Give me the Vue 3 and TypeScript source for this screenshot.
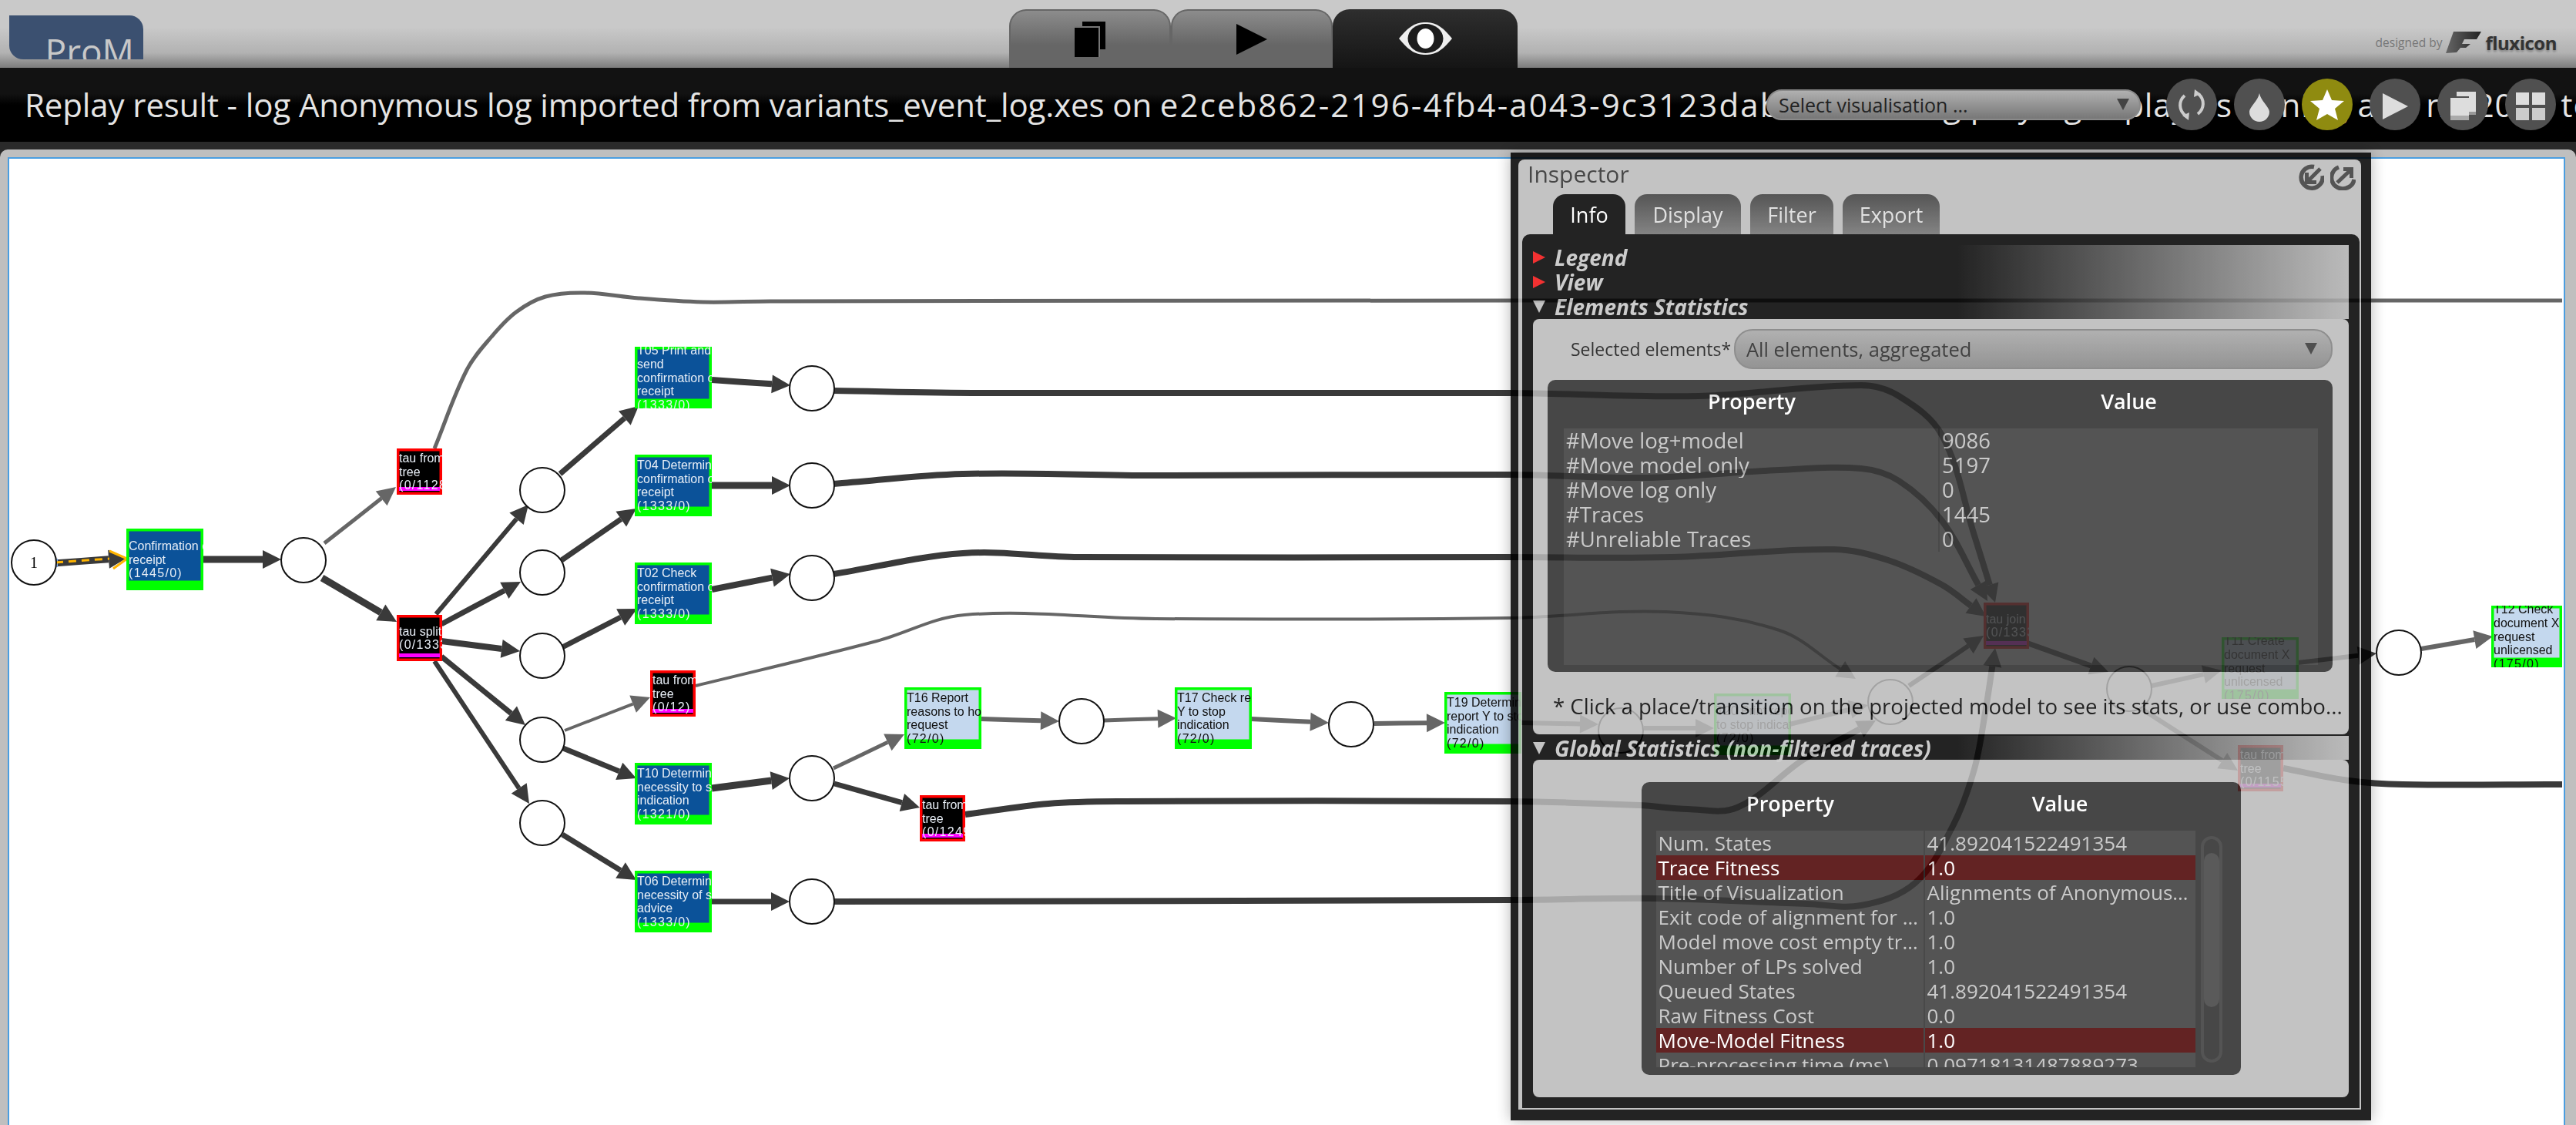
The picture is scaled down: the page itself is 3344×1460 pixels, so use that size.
<template>
  <div class="app">
    <header class="top-bar">
      <div class="logo"><span>ProM</span></div>
      <nav class="view-tabs">
        <div class="view-tab">
          <svg width="40" height="46" viewBox="0 0 40 46">
            <rect x="10" y="0" width="30" height="36" fill="#000" />
            <rect x="0" y="6" width="33" height="40" fill="#777" />
            <rect x="0" y="8" width="31" height="38" fill="#000" />
          </svg>
        </div>
        <div class="view-tab">
          <svg width="40" height="40" viewBox="0 0 40 40"><polygon points="0,0 40,20 0,40" fill="#000" /></svg>
        </div>
        <div class="view-tab view-tab--active">
          <svg width="69" height="42" viewBox="0 0 69 42">
            <path d="M0 21C14 4 22 0 34.5 0C47 0 55 4 69 21C55 38 47 42 34.5 42C22 42 14 38 0 21Z" fill="#eee" />
            <ellipse cx="34.5" cy="21" rx="23" ry="19" fill="#1c1c1c" />
            <ellipse cx="34.5" cy="21" rx="11" ry="13" fill="#fff" />
          </svg>
        </div>
      </nav>
      <div class="credit">
        <span class="credit-by">designed by</span>
        <svg width="46" height="30" viewBox="0 0 46 30">
          <defs>
            <linearGradient id="fx" x1="0" y1="0" x2="1" y2="0">
              <stop offset="0" stop-color="#666" />
              <stop offset="1" stop-color="#222" />
            </linearGradient>
          </defs>
          <path d="M10 1H46L40 11H24L21 17H32L26 22H19L14 28L0 29Z" fill="url(#fx)" />
        </svg>
        <span class="credit-name">fluxicon</span>
      </div>
    </header>

    <section class="title-bar">
      <div class="title-text">{{ titleHead }}<span class="title-id">{{ titleId }}</span><span class="title-tail">{{ titleTail }}</span></div>
      <div class="vis-select">
        <span>Select visualisation ...</span>
        <i class="caret"></i>
      </div>
      <div class="round-buttons">
        <button class="round">
          <svg width="66" height="66" viewBox="0 0 66 66">
            <path d="M24 21C16 28 16 40 25 47M42 19C50 26 50 38 41 45" fill="none" stroke="#ccc" stroke-width="4" />
            <polygon points="21,47 30,43 29,53" fill="#ccc" />
            <polygon points="45,19 36,23 37,13" fill="#ccc" />
          </svg>
        </button>
        <button class="round">
          <svg width="66" height="66" viewBox="0 0 66 66">
            <path d="M33 18C35 28 46 36 46 42A13 13 0 0 1 20 42C20 36 31 28 33 18Z" fill="#ddd" />
          </svg>
        </button>
        <button class="round round--on">
          <svg width="66" height="66" viewBox="0 0 66 66">
            <polygon points="33,13 39,27 55,28 43,38 47,53 33,45 19,53 23,38 11,28 27,27" fill="#fff" />
          </svg>
        </button>
        <button class="round">
          <svg width="66" height="66" viewBox="0 0 66 66"><polygon points="17,18 50,35 17,52" fill="#ddd" /></svg>
        </button>
        <button class="round">
          <svg width="66" height="66" viewBox="0 0 66 66">
            <rect x="25" y="16" width="25" height="30" fill="#ddd" />
            <rect x="41" y="42" width="9" height="4" fill="#999" />
            <rect x="15" y="22" width="26" height="31" fill="#505050" />
            <rect x="17" y="24" width="24" height="29" fill="#ddd" />
            <rect x="17" y="47" width="24" height="6" fill="#aaa" />
          </svg>
        </button>
        <button class="round">
          <svg width="66" height="66" viewBox="0 0 66 66">
            <rect x="14" y="17" width="17" height="16" fill="#ddd" />
            <rect x="35" y="17" width="17" height="16" fill="#ddd" />
            <rect x="14" y="37" width="17" height="16" fill="#ccc" />
            <rect x="35" y="37" width="17" height="16" fill="#ccc" />
          </svg>
        </button>
      </div>
    </section>

    <main class="workspace">
      <div class="frame">
        <div class="canvas">
          <svg class="graph" width="3316" height="1254" viewBox="12 206 3316 1254">
            <defs>
              <clipPath v-for="n in nodes" :id="n.id" :key="n.id">
                <rect :x="n.x" :y="n.y" :width="n.w" :height="n.h" />
              </clipPath>
            </defs>
            <g v-for="a in arrowShapes" :key="a.d">
              <path :d="a.d" fill="none" :stroke="a.c" :stroke-width="a.w" />
              <polygon v-if="a.head" :points="a.head" :fill="a.c" />
            </g>
            <!-- token moving on the first arc -->
            <rect x="66" y="725" width="9" height="11" fill="#7fa6e0" />
            <rect x="69" y="728" width="4" height="5" fill="#f00" />
            <path d="M72 730L142 725" stroke="#ffb400" stroke-width="3" stroke-dasharray="10 7" fill="none" />
            <path d="M142 715L165 725L147 738" stroke="#ffb400" stroke-width="3" fill="none" />

            <g v-for="p in places" :key="p.x + '-' + p.y">
              <circle :cx="p.x" :cy="p.y" r="29" fill="#fff" stroke="#111" stroke-width="2" />
              <text v-if="p.label" :x="p.x" :y="p.y + 7" class="place-label">{{ p.label }}</text>
            </g>

            <g v-for="n in nodes" :key="n.id">
              <rect :x="n.x" :y="n.y" :width="n.w" :height="n.h" :fill="n.kind === 'tau' ? '#f00' : '#0f0'" />
              <rect
                :x="n.x + 3.5"
                :y="n.y + 3.5"
                :width="n.w - 7"
                :height="n.kind === 'tau' ? n.h - 7 : n.h - 16"
                :fill="fillOf(n.kind)"
              />
              <rect v-if="n.kind === 'tau'" :x="n.x + 3" :y="n.y + 50" :width="n.w - 6" height="5" fill="#f0f" />
              <g :clip-path="`url(#${n.id})`">
                <text
                  v-for="(line, i) in n.lines"
                  :key="i"
                  :x="n.x + 3"
                  :y="n.y + n.h / 2 + 5.5 + (i - (n.lines.length - 1) / 2) * 17.8"
                  class="node-label"
                  :class="{ 'node-label--count': line.startsWith('(') }"
                  :fill="n.kind === 'light' ? '#111' : '#e8eef6'"
                >{{ line }}</text>
              </g>
            </g>
          </svg>
        </div>
      </div>
    </main>

    <aside class="inspector">
      <div class="inspector-body">
        <div class="inspector-head">
          <span class="inspector-title">Inspector</span>
          <div class="inspector-icons">
            <svg width="33" height="34" viewBox="0 0 33 34">
              <path d="M20 3.5A14 14 0 1 0 31 15" fill="none" stroke="#393939" stroke-width="5.5" />
              <path d="M28 6L11 23" fill="none" stroke="#393939" stroke-width="5" />
              <polygon points="8,11 13,11 13,21 23,21 23,26 8,26" fill="#393939" />
            </svg>
            <svg width="33" height="34" viewBox="0 0 33 34">
              <path d="M11 4A14 14 0 0 0 21 31A14 14 0 0 0 31 20" fill="none" stroke="#393939" stroke-width="5.5" />
              <path d="M9 24L27 7" fill="none" stroke="#393939" stroke-width="5" />
              <polygon points="17,4 30,4 30,18 25,18 25,9 17,9" fill="#393939" />
            </svg>
          </div>
        </div>
        <div class="inspector-tabs">
          <div v-for="t in tabs" :key="t" class="inspector-tab" :class="{ 'inspector-tab--active': t === 'Info' }">{{ t }}</div>
        </div>
        <div class="inspector-content">
          <div class="band">
            <div class="band-row"><i class="tri tri--red"></i>Legend</div>
            <div class="band-row"><i class="tri tri--red"></i>View</div>
            <div class="band-row"><i class="tri tri--down"></i>Elements Statistics</div>
          </div>
          <div class="sub-panel sub-panel--elements">
            <div class="selected-row">
              <label>Selected elements*</label>
              <div class="elements-select">
                <span>All elements, aggregated</span>
                <i class="caret caret--large"></i>
              </div>
            </div>
            <div class="stat-table stat-table--wide">
              <div class="stat-head"><span>Property</span><span>Value</span></div>
              <div class="stat-body">
                <div v-for="r in elementRows" :key="r[0]" class="stat-row">
                  <span>{{ r[0] }}</span><span>{{ r[1] }}</span>
                </div>
              </div>
            </div>
            <p class="footnote">* Click a place/transition on the projected model to see its stats, or use combo...</p>
          </div>
          <div class="band band--single">
            <div class="band-row"><i class="tri tri--down"></i>Global Statistics (non-filtered traces)</div>
          </div>
          <div class="sub-panel sub-panel--global">
            <div class="stat-table stat-table--narrow">
              <div class="stat-head"><span>Property</span><span>Value</span></div>
              <div class="stat-body">
                <div v-for="r in globalRows" :key="r[0]" class="stat-row" :class="{ 'stat-row--hit': r[0].endsWith('Fitness') }">
                  <span>{{ r[0] }}</span><span>{{ r[1] }}</span>
                </div>
              </div>
              <div class="scroll-track"><div class="scroll-thumb"></div></div>
            </div>
          </div>
        </div>
      </div>
    </aside>
  </div>
</template>

<script setup lang="ts">
type Kind = 'dark' | 'light' | 'tau'
type Pt = [number, number]

interface GraphNode {
  id: string
  x: number
  y: number
  w: number
  h: number
  kind: Kind
  lines: string[]
}

interface Arrow {
  pts: Pt[]
  w: number
  gray?: boolean
  noHead?: boolean
}

const titleHead = 'Replay result - log Anonymous log imported from variants_event_log.xes on '
const titleId = 'e2ceb862-2196-4fb4-a043-9c3123da'
const titleTail = 'b37f40 using playing replay as mining and no 2012 tool'

const tabs = ['Info', 'Display', 'Filter', 'Export']

const elementRows = [
  ['#Move log+model', '9086'],
  ['#Move model only', '5197'],
  ['#Move log only', '0'],
  ['#Traces', '1445'],
  ['#Unreliable Traces', '0']
]

const globalRows = [
  ['Num. States', '41.892041522491354'],
  ['Trace Fitness', '1.0'],
  ['Title of Visualization', 'Alignments of Anonymous log imported'],
  ['Exit code of alignment for ILP-based replay', '1.0'],
  ['Model move cost empty trace', '1.0'],
  ['Number of LPs solved', '1.0'],
  ['Queued States', '41.892041522491354'],
  ['Raw Fitness Cost', '0.0'],
  ['Move-Model Fitness', '1.0'],
  ['Pre-processing time (ms)', '0.09718131487889273']
]

function node(id: string, x: number, y: number, kind: Kind, lines: string[], w?: number): GraphNode {
  return { id, x, y, kind, lines, w: w ?? (kind === 'tau' ? 59 : 100), h: kind === 'tau' ? 60 : 80 }
}

const nodes: GraphNode[] = [
  node('n-start', 164, 686, 'dark', ['Confirmation of', 'receipt', '(1445/0)']),
  node('n-tau1', 515, 582, 'tau', ['tau from', 'tree', '(0/1128)']),
  node('n-split', 515, 798, 'tau', ['tau split', '(0/1333)']),
  node('n-t05', 824, 450, 'dark', ['T05 Print and', 'send', 'confirmation of', 'receipt', '(1333/0)']),
  node('n-t04', 824, 590, 'dark', ['T04 Determine', 'confirmation of', 'receipt', '(1333/0)']),
  node('n-t02', 824, 730, 'dark', ['T02 Check', 'confirmation of', 'receipt', '(1333/0)']),
  node('n-tau12', 844, 870, 'tau', ['tau from', 'tree', '(0/12)']),
  node('n-t10', 824, 990, 'dark', ['T10 Determine', 'necessity to stop', 'indication', '(1321/0)']),
  node('n-t06', 824, 1130, 'dark', ['T06 Determine', 'necessity of stop', 'advice', '(1333/0)']),
  node('n-t16', 1174, 892, 'light', ['T16 Report', 'reasons to hold', 'request', '(72/0)']),
  node('n-tau1246', 1194, 1032, 'tau', ['tau from', 'tree', '(0/1249)']),
  node('n-t17', 1525, 892, 'light', ['T17 Check report', 'Y to stop', 'indication', '(72/0)']),
  node('n-t19', 1875, 898, 'light', ['T19 Determine', 'report Y to stop', 'indication', '(72/0)']),
  node('n-t20', 2225, 900, 'light', ['T20 Print report Y', 'to stop indication', '(72/0)']),
  node('n-join', 2575, 782, 'tau', ['tau join', '(0/1333)']),
  node('n-t11', 2884, 827, 'light', ['T11 Create', 'document X', 'request', 'unlicensed', '(175/0)']),
  node('n-tau115', 2905, 967, 'tau', ['tau from', 'tree', '(0/1155)']),
  node('n-t12', 3234, 786, 'light', ['T12 Check', 'document X', 'request', 'unlicensed', '(175/0)'], 92)
]

const places: { x: number; y: number; label?: string }[] = [
  { x: 44, y: 730, label: '1' },
  { x: 394, y: 727 },
  { x: 704, y: 636 },
  { x: 704, y: 743 },
  { x: 704, y: 851 },
  { x: 704, y: 960 },
  { x: 704, y: 1068 },
  { x: 1054, y: 504 },
  { x: 1054, y: 630 },
  { x: 1054, y: 750 },
  { x: 1054, y: 1010 },
  { x: 1054, y: 1170 },
  { x: 1404, y: 936 },
  { x: 1754, y: 940 },
  { x: 2104, y: 948 },
  { x: 2454, y: 911 },
  { x: 2764, y: 894 },
  { x: 3114, y: 847 }
]

const arrows: Arrow[] = [
  { pts: [[70, 731], [165, 724]], w: 9 },
  { pts: [[263, 726], [365, 726]], w: 9 },
  { pts: [[421, 705], [514, 632]], w: 5, gray: true },
  { pts: [[418, 750], [515, 807]], w: 9 },
  { pts: [[566, 797], [686, 655]], w: 6 },
  { pts: [[573, 810], [676, 755]], w: 7 },
  { pts: [[573, 832], [675, 845]], w: 8 },
  { pts: [[573, 852], [682, 941]], w: 7 },
  { pts: [[564, 858], [687, 1043]], w: 6 },
  { pts: [[727, 615], [829, 527]], w: 7 },
  { pts: [[729, 727], [826, 660]], w: 7 },
  { pts: [[730, 840], [827, 790]], w: 7 },
  { pts: [[733, 948], [844, 905]], w: 4, gray: true },
  { pts: [[731, 971], [826, 1010]], w: 7 },
  { pts: [[730, 1083], [826, 1142]], w: 7 },
  { pts: [[924, 493], [1026, 500]], w: 8 },
  { pts: [[924, 630], [1026, 630]], w: 9 },
  { pts: [[924, 765], [1026, 745]], w: 8 },
  { pts: [[924, 1023], [1025, 1010]], w: 9 },
  { pts: [[1082, 997], [1174, 953]], w: 5, gray: true },
  { pts: [[1083, 1017], [1194, 1048]], w: 7 },
  { pts: [[924, 1170], [1025, 1170]], w: 7 },
  { pts: [[1274, 933], [1375, 936]], w: 6, gray: true },
  { pts: [[1433, 935], [1527, 932]], w: 5, gray: true },
  { pts: [[1624, 933], [1725, 938]], w: 6, gray: true },
  { pts: [[1784, 939], [1876, 938]], w: 6, gray: true },
  { pts: [[1975, 938], [2075, 940]], w: 6, gray: true },
  { pts: [[2134, 945], [2225, 945]], w: 6, gray: true },
  { pts: [[2323, 940], [2425, 915]], w: 6, gray: true },
  { pts: [[2478, 890], [2575, 825]], w: 6 },
  { pts: [[2633, 835], [2737, 872]], w: 7 },
  { pts: [[2793, 890], [2884, 870]], w: 6, gray: true },
  { pts: [[2983, 860], [3085, 848]], w: 6 },
  { pts: [[3143, 842], [3236, 826]], w: 6, gray: true },
  { pts: [[2780, 920], [2905, 1000]], w: 6, gray: true },
  // long curves
  { pts: [[564, 582], [606, 480], [638, 437], [670, 405], [708, 385], [759, 380], [829, 387], [912, 392], [1000, 391], [1970, 390], [3326, 390]], w: 5, gray: true, noHead: true },
  { pts: [[1082, 507], [1280, 510], [1960, 510], [2205, 514], [2416, 500], [2465, 514], [2521, 565], [2563, 695], [2590, 782]], w: 8 },
  { pts: [[1082, 628], [1250, 615], [1500, 617], [1960, 616], [2135, 620], [2310, 610], [2416, 608], [2465, 624], [2521, 676], [2580, 780]], w: 8 },
  { pts: [[1082, 745], [1250, 718], [1400, 723], [1960, 723], [2170, 723], [2381, 713], [2451, 727], [2521, 759], [2578, 800]], w: 8 },
  { pts: [[903, 890], [1138, 832], [1252, 798], [1500, 803], [1960, 802], [2163, 794], [2310, 818], [2409, 881]], w: 4, gray: true },
  { pts: [[1253, 1057], [1361, 1043], [1457, 1040], [1960, 1040], [2128, 1045], [2191, 1050], [2255, 1048], [2339, 987], [2381, 964], [2435, 935]], w: 8 },
  { pts: [[1083, 1170], [1960, 1168], [2149, 1166], [2346, 1173], [2416, 1175], [2486, 1146], [2535, 1072], [2563, 998], [2577, 925], [2590, 841]], w: 8 },
  { pts: [[2964, 997], [3049, 1013], [3119, 1018], [3326, 1018]], w: 8, noHead: true }
]

function smooth(pts: Pt[]): string {
  let d = `M${pts[0][0]} ${pts[0][1]}`
  for (let i = 0; i < pts.length - 1; i++) {
    const p0 = pts[Math.max(i - 1, 0)]
    const p1 = pts[i]
    const p2 = pts[i + 1]
    const p3 = pts[Math.min(i + 2, pts.length - 1)]
    const len = Math.hypot(p2[0] - p1[0], p2[1] - p1[1])
    const l0 = Math.hypot(p2[0] - p0[0], p2[1] - p0[1]) || 1
    const l1 = Math.hypot(p3[0] - p1[0], p3[1] - p1[1]) || 1
    const c1x = p1[0] + ((p2[0] - p0[0]) / l0) * len * 0.35
    const c1y = p1[1] + ((p2[1] - p0[1]) / l0) * len * 0.35
    const c2x = p2[0] - ((p3[0] - p1[0]) / l1) * len * 0.35
    const c2y = p2[1] - ((p3[1] - p1[1]) / l1) * len * 0.35
    d += `C${c1x.toFixed(1)} ${c1y.toFixed(1)} ${c2x.toFixed(1)} ${c2y.toFixed(1)} ${p2[0]} ${p2[1]}`
  }
  return d
}

const arrowShapes = arrows.map((a) => {
  const c = a.gray ? '#666' : '#3a3a3a'
  if (a.noHead) return { d: smooth(a.pts), w: a.w, c, head: '' }
  const tip = a.pts[a.pts.length - 1]
  const prev = a.pts[a.pts.length - 2]
  const len = Math.hypot(tip[0] - prev[0], tip[1] - prev[1])
  const ux = (tip[0] - prev[0]) / len
  const uy = (tip[1] - prev[1]) / len
  const bx = tip[0] - ux * 24
  const by = tip[1] - uy * 24
  const head = `${tip[0]},${tip[1]} ${bx - uy * 12},${by + ux * 12} ${bx + uy * 12},${by - ux * 12}`
  const body = [...a.pts.slice(0, -1), [bx, by] as Pt]
  return { d: smooth(body), w: a.w, c, head }
})

function fillOf(kind: Kind): string {
  if (kind === 'tau') return '#000'
  return kind === 'light' ? '#c4d8ee' : '#0b5299'
}
</script>

<style scoped>
.app {
  position: relative;
  width: 3344px;
  height: 1460px;
  overflow: hidden;
  display: flex;
  flex-direction: column;
  font-family: "Open Sans", "Liberation Sans", sans-serif;
}

.top-bar {
  height: 88px;
  flex: none;
  display: flex;
  background: linear-gradient(#c9c9c9 40%, #b2b2b2 78%, #7c7c7c);
}

.logo {
  width: 174px;
  height: 57px;
  margin: 20px 0 0 12px;
  background: #3b5070;
  border-radius: 0 18px 0 18px;
  overflow: hidden;
  text-align: right;
  padding-right: 12px;
  box-sizing: border-box;
}

.logo span {
  display: block;
  color: #c8c8c8;
  font-size: 46px;
  line-height: 56px;
  margin-top: 18px;
}

.view-tabs {
  display: flex;
  margin: 12px 0 0 1124px;
}

.view-tab {
  width: 210px;
  height: 76px;
  box-sizing: border-box;
  display: flex;
  align-items: center;
  justify-content: center;
  border: 2px solid #666;
  border-bottom: none;
  border-radius: 22px 22px 0 0;
  background: linear-gradient(#8c8c8c, #666 60%);
}

.view-tab--active {
  width: 240px;
  border: none;
  background: linear-gradient(#2e2e2e, #151515);
}

.credit {
  margin: 40px 25px 0 auto;
  height: 30px;
  display: flex;
  align-items: center;
  gap: 5px;
}

.credit-by {
  color: #777;
  font-size: 15.5px;
}

.credit-name {
  color: #333;
  font-size: 24px;
  font-weight: 700;
  letter-spacing: -0.5px;
  text-shadow: 0 2px 3px rgba(0, 0, 0, 0.3);
}

.title-bar {
  position: relative;
  height: 96px;
  flex: none;
  background: linear-gradient(#121212 35%, #000 50%);
  overflow: hidden;
}

.title-text {
  padding-left: 32px;
  line-height: 96px;
  white-space: nowrap;
  font-size: 42px;
  letter-spacing: -0.11px;
  color: #e4e4e4;
}

.title-id {
  letter-spacing: 2.1px;
}

.title-tail {
  letter-spacing: 0.8px;
}

.vis-select {
  position: absolute;
  left: 2293px;
  top: 28px;
  width: 486px;
  height: 40px;
  box-sizing: border-box;
  border: 2px solid #8a8a8a;
  border-radius: 20px;
  background: linear-gradient(#b0b0b0, #777);
  padding-left: 14px;
  font-size: 25px;
  line-height: 36px;
  color: #222;
}

.caret {
  position: absolute;
  right: 13px;
  top: 10px;
  border-left: 8px solid transparent;
  border-right: 8px solid transparent;
  border-top: 15px solid #444;
}

.round-buttons {
  position: absolute;
  left: 2812px;
  top: 14px;
  display: flex;
  gap: 22px;
}

.round {
  width: 66px;
  height: 67px;
  padding: 0;
  border: none;
  border-radius: 50%;
  background: #505050;
}

.round svg {
  display: block;
}

.round--on {
  background: #8f8b10;
}

.workspace {
  flex: 1;
  min-height: 0;
  display: flex;
  background: #2a2a2a;
  padding-top: 10px;
}

.frame {
  flex: 1;
  min-width: 0;
  background: #bfbfbf;
  border-radius: 10px 10px 0 0;
  padding: 10px 14px 0 10px;
}

.canvas {
  height: 100%;
  box-sizing: border-box;
  border: 2px solid #4a9ee0;
  border-bottom: none;
  background: #fff;
  overflow: hidden;
}

.graph {
  display: block;
  filter: blur(0.4px);
}

.place-label {
  font-family: "Liberation Serif", serif;
  font-size: 20px;
  text-anchor: middle;
}

.node-label {
  font-family: "Liberation Sans", sans-serif;
  font-size: 16px;
}

.node-label--count {
  letter-spacing: 1.3px;
}

/* inspector floats over the model, the whole panel is see-through */
.inspector {
  position: absolute;
  left: 1961px;
  top: 198px;
  width: 1117px;
  height: 1256px;
  box-sizing: border-box;
  padding: 9px 13px 14px 10px;
  background: #000;
  opacity: 0.86;
  box-shadow: 0 0 18px rgba(0, 0, 0, 0.35);
}

.inspector-body {
  height: 100%;
  box-sizing: border-box;
  padding: 0 2px 2px 5px;
  background: #bababa;
  border-radius: 8px 8px 0 0;
}

.inspector-head {
  height: 45px;
  display: flex;
  justify-content: space-between;
  padding: 0 5px 0 7px;
}

.inspector-title {
  font-size: 30px;
  line-height: 38px;
  color: #2a2a2a;
}

.inspector-icons {
  display: flex;
  gap: 8px;
  padding-top: 6px;
}

.inspector-tabs {
  display: flex;
  gap: 12px;
  height: 52px;
  padding-left: 40px;
}

.inspector-tab {
  width: 138px;
  text-align: center;
  border-radius: 16px 16px 0 0;
  background: linear-gradient(#3a3a3a, #707070);
  color: #ddd;
  font-size: 27px;
  line-height: 54px;
}

.inspector-tab:nth-child(1) {
  width: 94px;
}

.inspector-tab:nth-child(3) {
  width: 108px;
}

.inspector-tab:nth-child(4) {
  width: 126px;
}

.inspector-tab--active {
  background: #000;
  color: #fff;
}

.inspector-content {
  height: 1134px;
  box-sizing: border-box;
  padding: 14px 14px 0;
  background: #000;
  border-radius: 10px 10px 0 0;
}

.band {
  height: 96px;
  background: linear-gradient(90deg, transparent 52%, #b0b0b0);
}

.band--single {
  height: 33px;
  border-top: 2px solid #000;
  box-sizing: border-box;
}

.band-row {
  display: flex;
  align-items: center;
  height: 32px;
  color: #c4c4c4;
  font-size: 28px;
  font-weight: 700;
  font-style: italic;
}

.tri {
  flex: none;
  width: 0;
  height: 0;
  margin-right: 12px;
  border: 8px solid transparent;
}

.tri--red {
  border-left: 16px solid #f01010;
  border-right: none;
}

.tri--down {
  border-top: 16px solid #bbb;
  border-bottom: none;
}

.sub-panel {
  background: #bababa;
  border-radius: 8px;
  box-sizing: border-box;
}

.sub-panel--elements {
  height: 539px;
  padding: 13px 21px 0 19px;
}

.sub-panel--global {
  height: 438px;
  padding-top: 29px;
}

.selected-row {
  display: flex;
  align-items: center;
  height: 52px;
}

.selected-row label {
  width: 242px;
  padding-left: 30px;
  box-sizing: border-box;
  white-space: nowrap;
  font-size: 23px;
  color: #111;
}

.elements-select {
  position: relative;
  flex: 1;
  height: 52px;
  box-sizing: border-box;
  border: 2px solid #7c7c7c;
  border-radius: 24px;
  background: linear-gradient(#a4a4a4, #838383);
  padding-left: 14px;
  font-size: 25.5px;
  line-height: 48px;
  color: #222;
}

.caret--large {
  top: 16px;
  right: 18px;
  border-top-color: #333;
}

.stat-table {
  position: relative;
  background: #292929;
  border-radius: 10px;
  box-sizing: border-box;
}

.stat-table--wide {
  height: 379px;
  margin-top: 14px;
  padding: 0 19px 0 21px;
  --split: 488px;
}

.stat-table--narrow {
  width: 778px;
  height: 380px;
  margin: 0 auto;
  padding: 0 59px 0 19px;
  --split: 349px;
}

.stat-head {
  height: 63px;
  display: flex;
  color: #fff;
  font-size: 27px;
  font-weight: 600;
  line-height: 56px;
  text-align: center;
}

.stat-head span:first-child {
  width: var(--split);
}

.stat-head span:last-child {
  flex: 1;
}

.stat-body {
  background: #393939;
  overflow: hidden;
  color: #c2c2c2;
  font-size: 26px;
  height: 307px;
}

.stat-table--wide .stat-body {
  font-size: 27.5px;
}

.stat-row {
  height: 32px;
  display: flex;
  line-height: 32px;
}

.stat-row span {
  box-sizing: border-box;
  padding: 0 3px;
  white-space: nowrap;
  overflow: hidden;
  text-overflow: ellipsis;
}

.stat-row span:first-child {
  width: var(--split);
  border-right: 2px solid #2c2c2c;
}

.stat-row span:last-child {
  flex: 1;
}

.stat-row--hit {
  background: #4a0000;
  color: #fff;
}

.scroll-track {
  position: absolute;
  left: 726px;
  top: 70px;
  width: 28px;
  height: 294px;
  box-sizing: border-box;
  border: 4px solid #393939;
  border-radius: 14px;
}

.scroll-thumb {
  height: 200px;
  margin-top: 18px;
  border-radius: 10px;
  background: #3f3f3f;
}

.footnote {
  margin: 26px 0 0 7px;
  font-size: 27.6px;
  line-height: 36px;
  color: #000;
  white-space: nowrap;
}
</style>

<style>
body {
  background: #fff;
}
</style>
